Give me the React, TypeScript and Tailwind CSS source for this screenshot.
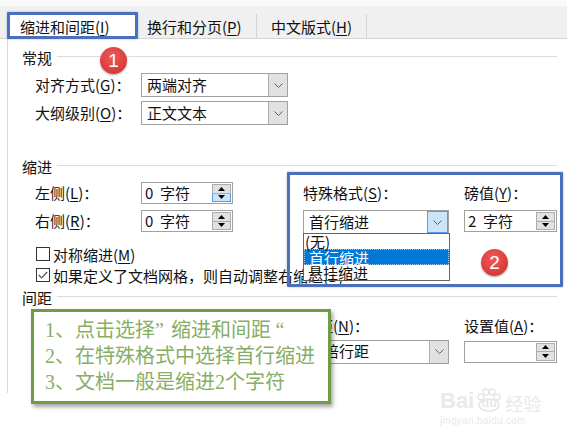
import React from "react";

const Chevron = () => (
  <svg width="9" height="5" viewBox="0 0 9 5" className="block">
    <path d="M0.5 0.5 L4.5 4.5 L8.5 0.5" fill="none" stroke="#5f5f5f" strokeWidth="1" />
  </svg>
);

const Tri = ({ up }: { up?: boolean }) => (
  <svg width="7" height="4" viewBox="0 0 7 4" className="block">
    <path d={up ? "M3.5 0 L7 4 L0 4 Z" : "M0 0 L7 0 L3.5 4 Z"} fill="#000" />
  </svg>
);

function M({ c }: { c: string }) {
  return (
    <>
      (<span className="underline underline-offset-[2px] decoration-1">{c}</span>)
    </>
  );
}

function Select({
  text,
  className = "",
  open = false,
  children,
}: {
  text: React.ReactNode;
  className?: string;
  open?: boolean;
  children?: React.ReactNode;
}) {
  return (
    <div className={`relative h-[24px] border border-[#a0a0a0] bg-white flex ${className}`}>
      <div className="flex-1 flex items-center pl-[5px] whitespace-nowrap overflow-hidden">{text}</div>
      <div
        className={
          open
            ? "w-[21px] bg-[#cce4f7] border border-[#569de5] flex items-center justify-center"
            : "w-[19px] bg-[#e1e1e1] border-l border-[#adadad] flex items-center justify-center"
        }
      >
        <Chevron />
      </div>
      {children}
    </div>
  );
}

function Spin({ text, className = "", hover = false }: { text: string; className?: string; hover?: boolean }) {
  return (
    <div className={`h-[22px] border border-[#a0a0a0] bg-white flex ${className}`}>
      <div className="flex-1 flex items-center pl-[3px] whitespace-pre">{text}</div>
      <div className="w-[20px] flex flex-col py-[1px] pr-[1px]">
        <div className="flex-1 bg-[#e1e1e1] border border-[#acacac] flex items-center justify-center">
          <Tri up />
        </div>
        <div
          className={`flex-1 border border-t-0 flex items-center justify-center ${
            hover ? "bg-[#cce4f7] border-[#569de5]" : "bg-[#e1e1e1] border-[#acacac]"
          }`}
        >
          <Tri />
        </div>
      </div>
    </div>
  );
}

function Heading({ t, className = "" }: { t: string; className?: string }) {
  return (
    <div className={`flex items-center h-[20px] ${className}`}>
      <span className="leading-none">{t}</span>
      <div className="flex-1 h-px bg-[#dcdcdc] ml-[5px] -mt-[2px]" />
    </div>
  );
}

function Check({ checked, children, className = "" }: { checked?: boolean; children: React.ReactNode; className?: string }) {
  return (
    <div className={`flex items-center h-[20px] ml-[14px] whitespace-nowrap ${className}`}>
      <div className="w-[14px] h-[14px] border border-[#333] bg-white flex items-center justify-center shrink-0">
        {checked && (
          <svg width="10" height="8" viewBox="0 0 10 8" className="block">
            <path d="M0.8 4 L3.6 6.8 L9.2 1" fill="none" stroke="#555" strokeWidth="1.2" />
          </svg>
        )}
      </div>
      <span className="ml-[3px] leading-none">{children}</span>
    </div>
  );
}

function Badge({ n, className }: { n: string; className: string }) {
  return (
    <div
      className={`absolute w-[27px] h-[27px] rounded-full bg-[radial-gradient(circle_at_45%_35%,#ee5a58,#d93a38_70%,#c42f2e)] shadow-[0_1px_2px_rgba(0,0,0,0.35)] flex items-center justify-center text-white text-[19px] leading-none font-['Liberation_Sans',sans-serif] ${className}`}
    >
      {n}
    </div>
  );
}

export default function App() {
  return (
    <div className="relative w-[567px] h-[438px] overflow-hidden bg-white text-[15px] text-[#111] font-['Noto_Sans_CJK_SC','Noto_Sans',sans-serif]">
      <div className="h-[6px] bg-[#fafafa]" />
      {/* tab bar */}
      <div className="h-[33px] bg-[#f0f0f0] border-b border-[#d4d4d4] flex items-end">
        <div className="ml-[8px] w-[129px] h-[26px] bg-white -mb-px flex items-center pl-[12px] whitespace-nowrap leading-none">
          缩进和间距<M c="I" />
        </div>
        <div className="w-[120px] h-[24px] border-r border-[#d4d4d4] flex items-center pl-[10px] whitespace-nowrap leading-none">
          换行和分页<M c="P" />
        </div>
        <div className="w-[110px] h-[24px] border-r border-[#d4d4d4] flex items-center pl-[14px] whitespace-nowrap leading-none">
          中文版式<M c="H" />
        </div>
      </div>

      {/* panel */}
      <div className="ml-[7px] h-[354px] border-l border-[#d9d9d9] pl-[14px] pr-[10px] flex flex-col">
        <Heading t="常规" className="mt-[8px]" />
        <div className="flex items-center ml-[13px] mt-[6px]">
          <div className="w-[106px] whitespace-nowrap">
            对齐方式<M c="G" />：
          </div>
          <Select text="两端对齐" className="w-[147px]" />
        </div>
        <div className="flex items-center ml-[13px] mt-[4px]">
          <div className="w-[106px] whitespace-nowrap">
            大纲级别<M c="O" />：
          </div>
          <Select text="正文文本" className="w-[147px]" />
        </div>

        <Heading t="缩进" className="mt-[31px]" />
        <div className="grid grid-cols-[106px_92px_70px_146px_15px_93px] grid-rows-[22px_22px] gap-y-[6px] items-center ml-[13px] mt-[6px] whitespace-nowrap">
          <div>
            左侧<M c="L" />：
          </div>
          <Spin text="0  字符" hover />
          <div className="col-start-4">
            特殊格式<M c="S" />：
          </div>
          <div className="col-start-6">
            磅值<M c="Y" />：
          </div>
          <div>
            右侧<M c="R" />：
          </div>
          <Spin text="0  字符" />
          <div className="col-start-4 self-start relative z-10">
            <Select text="首行缩进" open className="w-[146px] h-[23px]">
              <div className="absolute left-[-1px] top-full w-[147px] bg-white border border-[#646464] text-[15px] leading-[15px]">
                <div className="h-[15px] pl-[1px]">(无)</div>
                <div className="h-[16px] pl-[4px] bg-[#0078d7] text-white border border-dotted border-[#9cc8ee]">首行缩进</div>
                <div className="h-[15px] pl-[4px]">悬挂缩进</div>
              </div>
            </Select>
          </div>
          <Spin text="2  字符" className="col-start-6" />
        </div>

        <Check className="mt-[12px]">
          对称缩进<M c="M" />
        </Check>
        <Check checked className="mt-[1px]">
          如果定义了文档网格，则自动调整右缩进<M c="D" />
        </Check>

        <Heading t="间距" className="mt-[2px]" />
        <div className="grid grid-cols-[106px_92px_70px_146px_15px_93px] grid-rows-[20px_23px] gap-y-[4px] items-center ml-[13px] mt-[9px] whitespace-nowrap">
          <div>
            段前<M c="B" />：
          </div>
          <Spin text="0  行" />
          <div className="col-start-4">
            行距<M c="N" />：
          </div>
          <div className="col-start-6">
            设置值<M c="A" />：
          </div>
          <div>
            段后<M c="F" />：
          </div>
          <Spin text="0  行" />
          <Select text="单倍行距" className="col-start-4 w-[146px] h-[23px]" />
          <Spin text="" className="col-start-6" />
        </div>
      </div>

      {/* annotation overlays */}
      <div className="absolute left-[7px] top-[12px] w-[131px] h-[27px] border-[3px] border-[#4a70bb] rounded-[1px] shadow-[0_0_2px_rgba(74,112,187,0.6)]" />
      <div className="absolute left-[287px] top-[172px] w-[276px] h-[115px] border-[3px] border-[#4a70bb] rounded-[1px] shadow-[0_0_2px_rgba(74,112,187,0.6)]" />

      <Badge n="1" className="left-[100px] top-[47px]" />
      <Badge n="2" className="left-[481px] top-[249px]" />

      <div className="absolute left-[31px] top-[309px] w-[300px] h-[95px] border-[3px] border-[#6f9d45] bg-white shadow-[2px_3px_4px_rgba(0,0,0,0.35)] pl-[11px] pt-[5px] text-[20px] leading-[26px] text-[#88ae66] whitespace-nowrap font-['Liberation_Serif','Noto_Sans_CJK_SC',serif]">
        <div>
          1、点击选择<span className="inline-block w-[16px] text-left">”</span>缩进和间距
          <span className="inline-block w-[18px] text-center">“</span>
        </div>
        <div>2、在特殊格式中选择首行缩进</div>
        <div>3、文档一般是缩进2个字符</div>
      </div>

      {/* watermark */}
      <div className="absolute left-[440px] top-[388px] text-[#e9e9e9] leading-none font-['Liberation_Sans',sans-serif]">
        <div className="flex items-end">
          <span className="text-[22px] font-bold">Bai</span>
          <span className="relative w-[28px] h-[24px] ml-[1px] flex items-end justify-center">
            <svg width="28" height="24" viewBox="0 0 28 24" className="absolute left-0 top-0">
              <g fill="none" stroke="#e6e6e6" strokeWidth="1.5">
                <circle cx="6" cy="9" r="3" />
                <circle cx="11" cy="4" r="3" />
                <circle cx="17" cy="4" r="3" />
                <circle cx="22" cy="9" r="3" />
                <ellipse cx="14" cy="17" rx="10" ry="6" />
              </g>
            </svg>
            <span className="relative text-[13px] font-bold mb-[3px]">du</span>
          </span>
          <span className="text-[18px] ml-[2px] font-['Noto_Sans_CJK_SC',sans-serif]">经验</span>
        </div>
        <div className="text-[10px] mt-[4px] tracking-[0.3px]">jingyan.baidu.com</div>
      </div>
    </div>
  );
}
